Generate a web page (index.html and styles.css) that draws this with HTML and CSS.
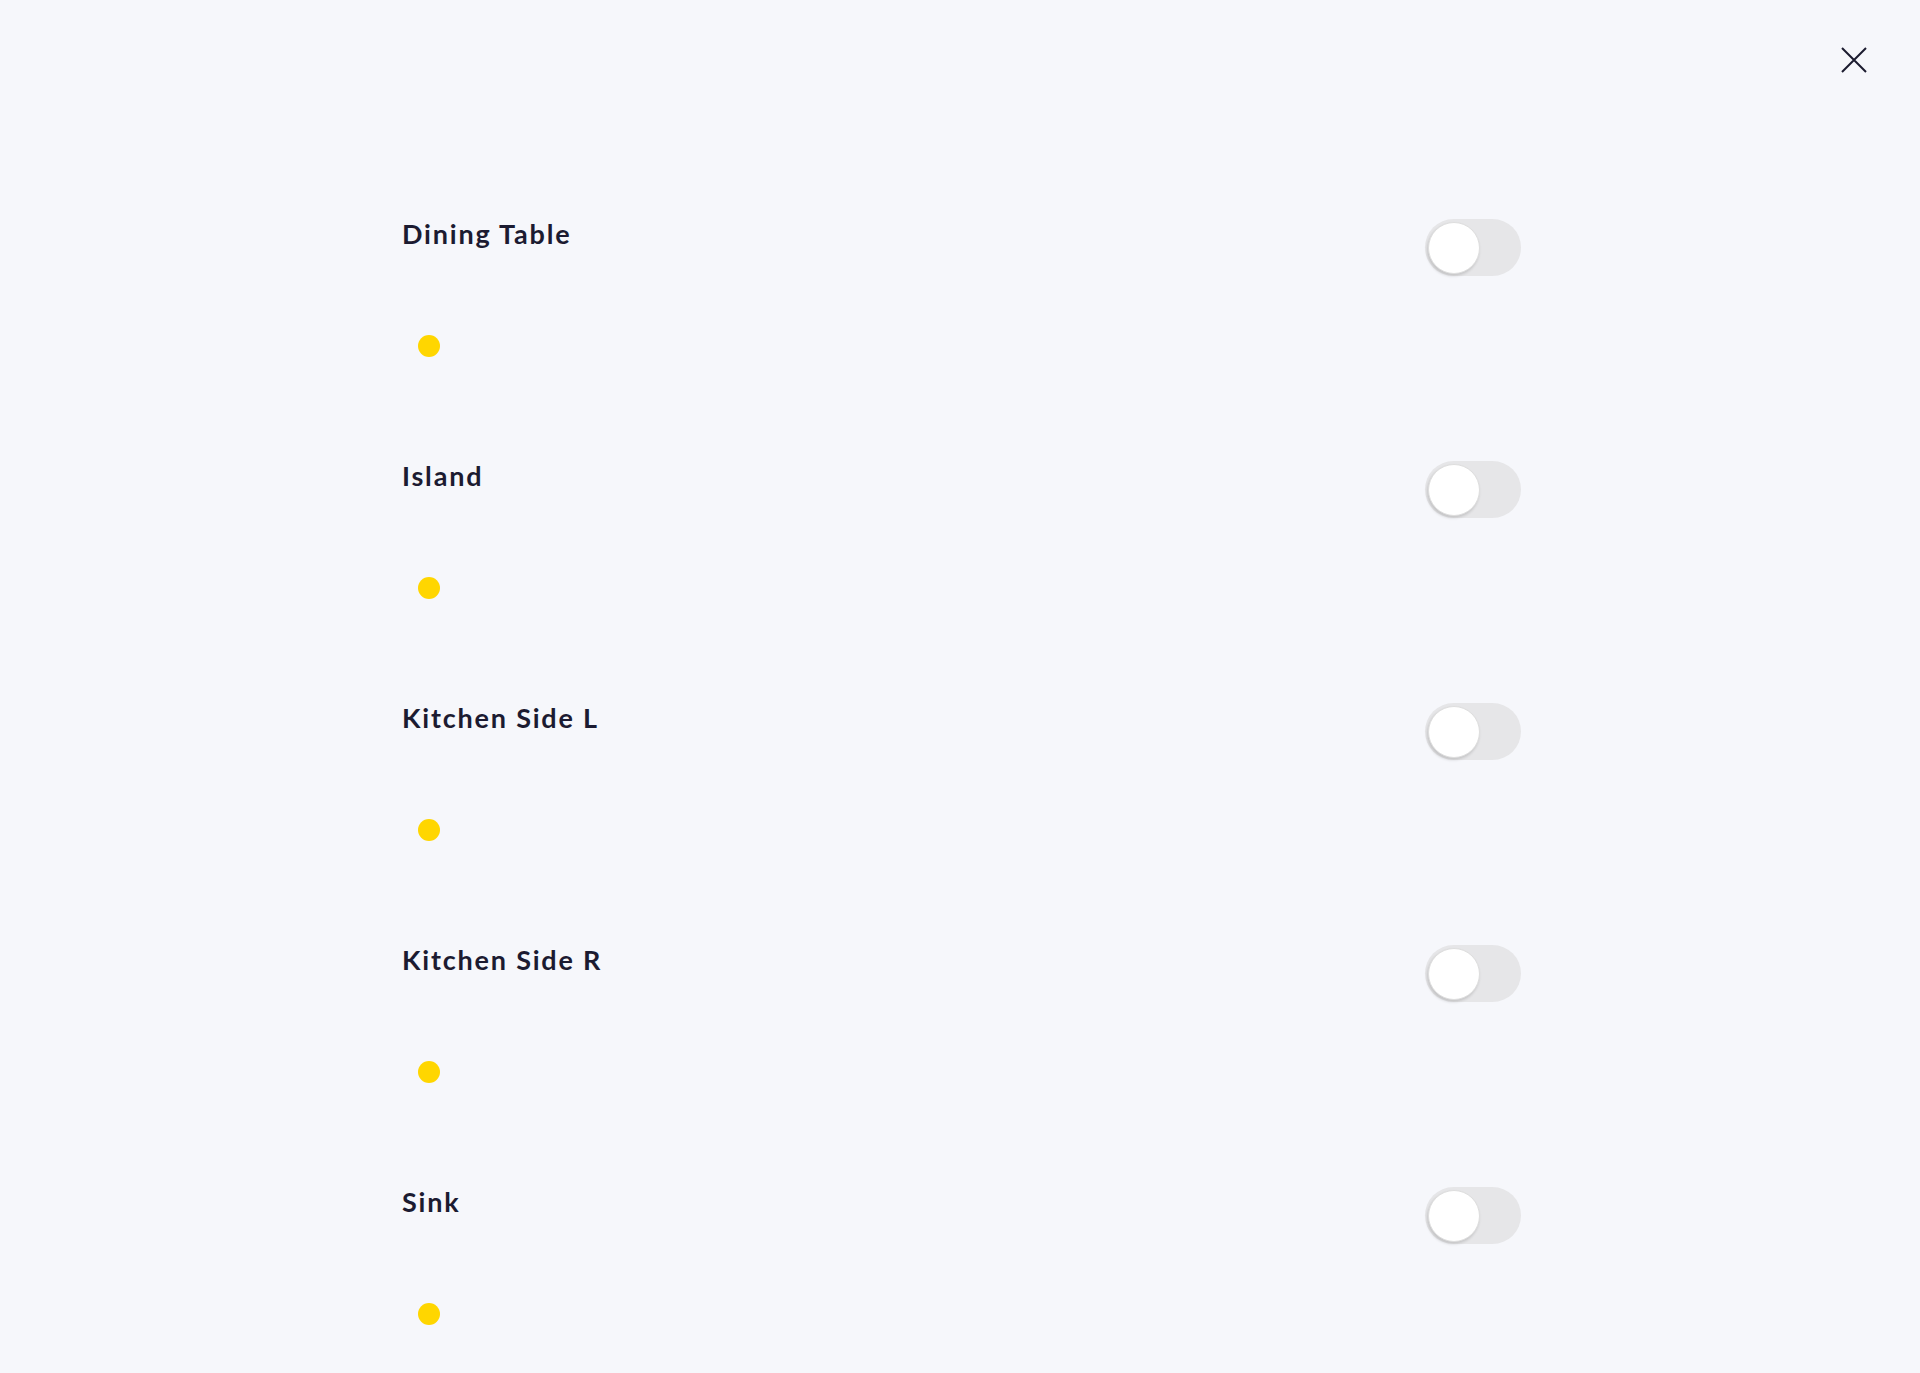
FILE: index.html
```html
<!DOCTYPE html>
<html lang="en">
<head>
<meta charset="utf-8">
<title>Lights</title>
<link rel="stylesheet" href="styles.css">
</head>
<body>
<div class="modal">
  <button class="close" aria-label="Close">
    <svg width="26" height="26" viewBox="0 0 26 26"><path d="M1 1 L25 25 M25 1 L1 25" stroke="#1b1b2f" stroke-width="2" fill="none"/></svg>
  </button>
  <div class="list">
    <div class="row">
      <div class="row-head"><span class="title">Dining Table</span><span class="toggle"><span class="knob"></span></span></div>
      <span class="dot"></span>
    </div>
    <div class="row">
      <div class="row-head"><span class="title">Island</span><span class="toggle"><span class="knob"></span></span></div>
      <span class="dot"></span>
    </div>
    <div class="row">
      <div class="row-head"><span class="title">Kitchen Side L</span><span class="toggle"><span class="knob"></span></span></div>
      <span class="dot"></span>
    </div>
    <div class="row">
      <div class="row-head"><span class="title">Kitchen Side R</span><span class="toggle"><span class="knob"></span></span></div>
      <span class="dot"></span>
    </div>
    <div class="row">
      <div class="row-head"><span class="title">Sink</span><span class="toggle"><span class="knob"></span></span></div>
      <span class="dot"></span>
    </div>
  </div>
</div>
</body>
</html>
```
FILE: styles.css
```css
html, body {
  margin: 0;
  padding: 0;
  background: #f6f7fb;
  height: 100%;
  overflow: hidden;
}
.modal {
  position: relative;
  height: 1373px;
  font-family: Lato, "Noto Sans", sans-serif;
}
.close {
  position: absolute;
  top: 47px;
  left: 1841px;
  width: 26px;
  height: 26px;
  padding: 0;
  border: 0;
  background: none;
  cursor: pointer;
}
.close svg { display: block; }
.list {
  display: flex;
  flex-direction: column;
  gap: 104px;
  padding: 219px 0 0 402px;
  width: 1119px;
}
.row {
  display: flex;
  flex-direction: column;
}
.row-head {
  display: flex;
  justify-content: space-between;
  align-items: flex-start;
}
.title {
  font-size: 27px;
  line-height: 30px;
  font-weight: 700;
  letter-spacing: 1.8px;
  color: #1c1b31;
}
.toggle {
  position: relative;
  width: 96px;
  height: 57px;
  border-radius: 29px;
  background: #e6e6e8;
}
.knob {
  position: absolute;
  left: 3px;
  top: 3px;
  width: 50px;
  height: 50px;
  border-radius: 50%;
  background: #fff;
  border: 1px solid #dedede;
  box-shadow: -1px 2px 3px rgba(0,0,0,0.15);
}
.dot {
  margin: 59px 0 0 16px;
  width: 22px;
  height: 22px;
  border-radius: 50%;
  background: #ffd600;
}
```
